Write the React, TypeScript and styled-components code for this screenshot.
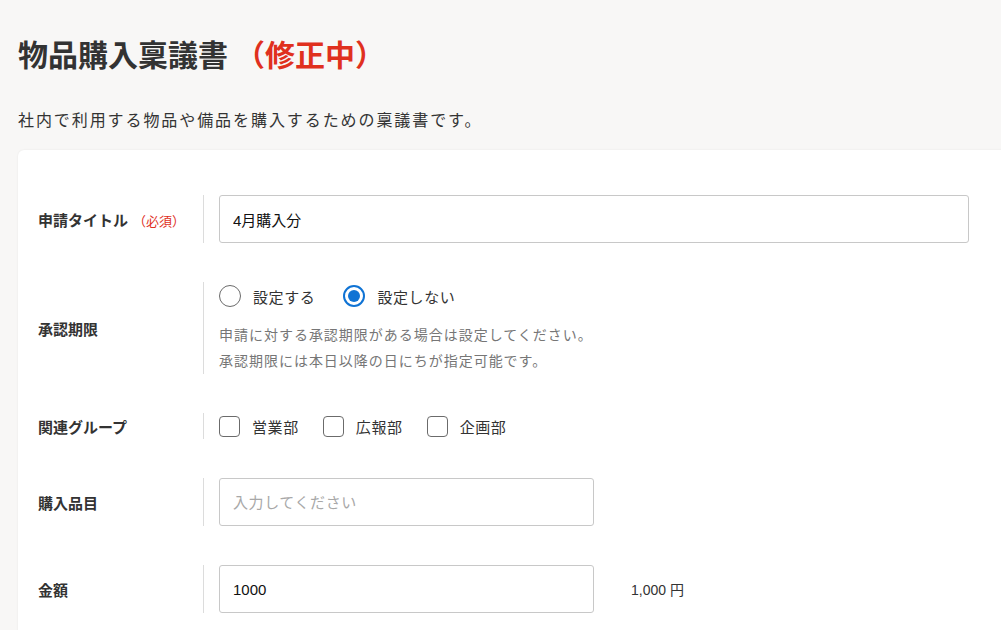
import React from "react";
import styled, { createGlobalStyle } from "styled-components";

const GlobalStyle = createGlobalStyle`
  body {
    margin: 0;
    background: #f8f7f6;
    color: #23221f;
    font-family: "Liberation Sans", "Noto Sans CJK JP", sans-serif;
  }
`;

const Page = styled.div`
  padding: 34px 0 0 18px;
  overflow: hidden;
`;

const Title = styled.h1`
  margin: 0;
  font-size: 30px;
  line-height: 44px;
  font-weight: 700;
  color: #333;
`;

const Status = styled.span`
  margin-left: 7px;
  color: #e0301e;
`;

const Lead = styled.p`
  margin: 30px 0 16px;
  font-size: 16px;
  line-height: 26px;
  letter-spacing: 0.12em;
  color: #333;
`;

const Card = styled.section`
  width: 1100px;
  background: #fff;
  border-radius: 6px;
  box-shadow: 0 0 2px rgba(0, 0, 0, 0.08);
  padding: 45px 0 40px 20px;
  display: flex;
  flex-direction: column;
  gap: 39px;
`;

const FieldRow = styled.div`
  display: grid;
  grid-template-columns: 165px 1fr;
  align-items: center;
`;

const FieldLabel = styled.div`
  font-size: 15px;
  font-weight: 700;
  color: #333;
`;

const Required = styled.span`
  margin-left: 5px;
  font-size: 13px;
  font-weight: 400;
  color: #e0301e;
`;

const FieldBody = styled.div`
  border-left: 1px solid #dcdcdc;
  padding-left: 15px;
  display: flex;
  align-items: center;
  flex-wrap: wrap;
`;

const Stack = styled.div`
  display: flex;
  flex-direction: column;
`;

const TextInput = styled.input<{ $width: number }>`
  box-sizing: border-box;
  width: ${(p) => p.$width}px;
  height: 48px;
  padding: 0 13px;
  border: 1px solid #c8c8c8;
  border-radius: 3px;
  font-family: inherit;
  font-size: 15px;
  color: #111;
  background: #fff;
  outline: none;

  &::placeholder {
    color: #a8a8a8;
    letter-spacing: 0.04em;
  }
`;

const OptionGroup = styled.div<{ $gap: number; $height: number }>`
  display: flex;
  align-items: center;
  gap: ${(p) => p.$gap}px;
  height: ${(p) => p.$height}px;
`;

const Option = styled.label`
  display: flex;
  align-items: center;
  gap: 12px;
  font-size: 15px;
  letter-spacing: 0.04em;
  color: #333;
`;

const RadioMark = styled.span<{ $checked?: boolean }>`
  box-sizing: border-box;
  width: 22px;
  height: 22px;
  border-radius: 50%;
  border: ${(p) => (p.$checked ? "2px solid #0f73d4" : "1.5px solid #6b6b6b")};
  display: flex;
  align-items: center;
  justify-content: center;

  &::after {
    content: "";
    display: ${(p) => (p.$checked ? "block" : "none")};
    width: 12px;
    height: 12px;
    border-radius: 50%;
    background: #0f73d4;
  }
`;

const CheckMark = styled.span`
  box-sizing: border-box;
  width: 21px;
  height: 21px;
  border: 1.5px solid #6b6b6b;
  border-radius: 4px;
`;

const HelpText = styled.p`
  margin: 12px 0 0;
  font-size: 14px;
  line-height: 26px;
  letter-spacing: 0.07em;
  color: #767676;
`;

const Suffix = styled.span`
  margin-left: 37px;
  font-size: 14px;
  color: #333;
`;

export default function App() {
  return (
    <Page>
      <GlobalStyle />
      <Title>
        物品購入稟議書<Status>（修正中）</Status>
      </Title>
      <Lead>社内で利用する物品や備品を購入するための稟議書です。</Lead>
      <Card>
        <FieldRow>
          <FieldLabel>
            申請タイトル<Required>（必須）</Required>
          </FieldLabel>
          <FieldBody>
            <TextInput $width={750} defaultValue="4月購入分" />
          </FieldBody>
        </FieldRow>

        <FieldRow>
          <FieldLabel>承認期限</FieldLabel>
          <FieldBody>
            <Stack>
              <OptionGroup $gap={28} $height={28}>
                <Option>
                  <RadioMark />
                  設定する
                </Option>
                <Option>
                  <RadioMark $checked />
                  設定しない
                </Option>
              </OptionGroup>
              <HelpText>
                申請に対する承認期限がある場合は設定してください。
                <br />
                承認期限には本日以降の日にちが指定可能です。
              </HelpText>
            </Stack>
          </FieldBody>
        </FieldRow>

        <FieldRow>
          <FieldLabel>関連グループ</FieldLabel>
          <FieldBody>
            <OptionGroup $gap={24} $height={26}>
              {["営業部", "広報部", "企画部"].map((name) => (
                <Option key={name}>
                  <CheckMark />
                  {name}
                </Option>
              ))}
            </OptionGroup>
          </FieldBody>
        </FieldRow>

        <FieldRow>
          <FieldLabel>購入品目</FieldLabel>
          <FieldBody>
            <TextInput $width={375} placeholder="入力してください" />
          </FieldBody>
        </FieldRow>

        <FieldRow>
          <FieldLabel>金額</FieldLabel>
          <FieldBody>
            <TextInput $width={375} defaultValue="1000" />
            <Suffix>1,000 円</Suffix>
          </FieldBody>
        </FieldRow>
      </Card>
    </Page>
  );
}
